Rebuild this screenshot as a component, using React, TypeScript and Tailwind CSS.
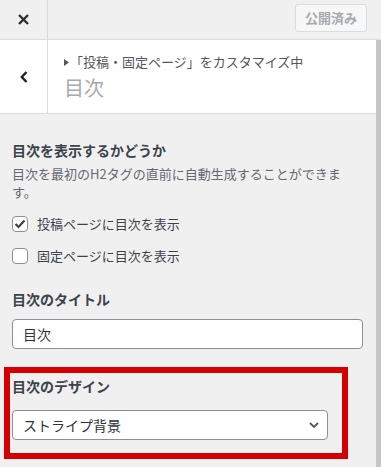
import React from 'react';

const font = { fontFamily: '"Noto Sans CJK JP", "Noto Sans", sans-serif' };

function Checkbox({ checked, label }: { checked?: boolean; label: string }) {
  return (
    <label className="flex items-center h-[16px] gap-[9px] text-[13px] text-[#3c434a]">
      <span className="w-[16px] h-[16px] rounded-[4px] border border-[#8c8f94] bg-white flex items-center justify-center">
        {checked && (
          <svg width="12" height="10" viewBox="0 0 12 10">
            <path d="M1.5 5 L4.5 8 L10.5 1.5" fill="none" stroke="#3c434a" strokeWidth="2.2" />
          </svg>
        )}
      </span>
      <span className="leading-[16px]">{label}</span>
    </label>
  );
}

export default function App() {
  return (
    <div style={font} className="w-[381px] h-[467px] overflow-hidden bg-[#f0f0f1] flex flex-col">
      {/* top bar */}
      <div className="flex h-[40px] border-b border-[#dcdcde] bg-[#f0f0f1] shrink-0">
        <div className="w-[48px] border-r border-[#dcdcde] flex items-center justify-center">
          <svg width="11" height="11" viewBox="0 0 11 11">
            <path d="M1 1 L10 10 M10 1 L1 10" stroke="#2c3338" strokeWidth="2.4" />
          </svg>
        </div>
        <div className="flex-1 flex justify-end items-start pt-[4px] pr-[14px]">
          <div className="w-[72px] h-[28px] rounded-[3px] border border-[#dcdcde] bg-[#f6f7f7] text-[#a7aaad] text-[13px] font-semibold flex items-center justify-center">
            公開済み
          </div>
        </div>
      </div>

      <div className="flex flex-1 min-h-0">
        <div className="flex-1 flex flex-col">
          {/* section header */}
          <div className="flex h-[74px] bg-white border-b border-[#dcdcde] shrink-0">
            <div className="w-[48px] border-r border-[#dcdcde] flex items-center justify-center">
              <svg width="8" height="12" viewBox="0 0 8 12">
                <path d="M6.5 1 L1.8 6 L6.5 11" fill="none" stroke="#1d2327" strokeWidth="2.4" />
              </svg>
            </div>
            <div className="pl-[16px] pt-[13px]">
              <div className="flex items-center text-[13px] leading-[18px] text-[#50575e]">
                <svg width="5" height="7" viewBox="0 0 5 7" className="mr-[1px]">
                  <path d="M0 0 L5 3.5 L0 7 Z" fill="#50575e" />
                </svg>
                「投稿・固定ページ」をカスタマイズ中
              </div>
              <div className="mt-[4px] text-[20px] leading-[26px] text-[#a7aaad]">目次</div>
            </div>
          </div>

          {/* controls */}
          <div className="px-[12px] pt-[26px]">
            <div className="text-[14px] leading-[20px] font-bold text-[#3c434a]">目次を表示するかどうか</div>
            <p className="mt-[5px] text-[13px] leading-[18px] text-[#646970]">
              目次を最初のH2タグの直前に自動生成することができま<br />す。
            </p>
            <div className="mt-[15px] flex flex-col gap-[16px]">
              <Checkbox checked label="投稿ページに目次を表示" />
              <Checkbox label="固定ページに目次を表示" />
            </div>

            <div className="mt-[25px] text-[14px] leading-[20px] font-bold text-[#3c434a]">目次のタイトル</div>
            <div className="mt-[10px] h-[30px] w-[351px] rounded-[4px] border border-[#8c8f94] bg-white flex items-center pl-[10px] text-[14px] text-[#2c3338]">
              目次
            </div>

            <div className="mt-[18px] -ml-[8px] w-[344px] border-[6px] border-[#d40000] pl-[2px] pt-[3px] pb-[13px]">
              <div className="text-[14px] leading-[20px] font-bold text-[#3c434a]">目次のデザイン</div>
              <div className="mt-[14px] h-[30px] w-[316px] rounded-[4px] border border-[#8c8f94] bg-white flex items-center justify-between pl-[10px] pr-[8px] text-[14px] text-[#2c3338]">
                <span>ストライプ背景</span>
                <svg width="10" height="6" viewBox="0 0 10 6">
                  <path d="M1 1 L5 5 L9 1" fill="none" stroke="#50575e" strokeWidth="1.8" />
                </svg>
              </div>
            </div>
          </div>
        </div>
        {/* scrollbar */}
        <div className="w-[5px] bg-[#c6c6c6] shrink-0" />
      </div>
    </div>
  );
}
